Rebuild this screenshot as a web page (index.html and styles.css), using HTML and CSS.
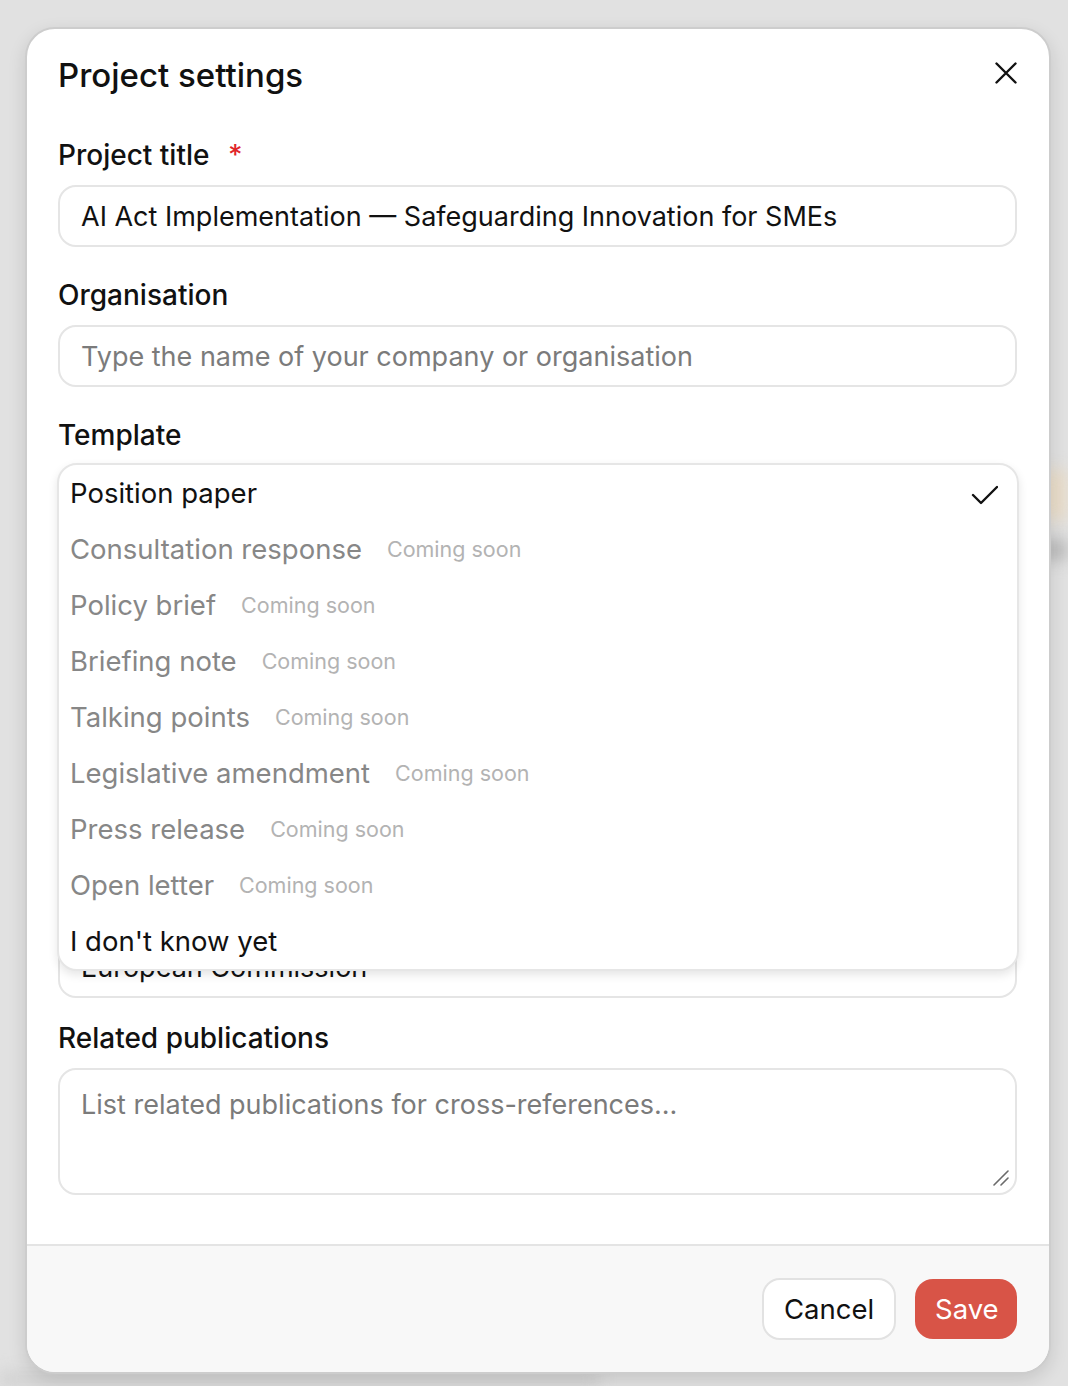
FILE: index.html
```html
<!DOCTYPE html>
<html>
<head>
    <link rel="stylesheet" href="styles.css">
</head>
<body>
    <div class="backdrop">
        <div class="blur-item blur-a"></div>
        <div class="blur-item blur-b"></div>
        <div class="blur-item blur-c"></div>
    </div>

    <div class="modal">
        <div class="modal-head">
            <h2 class="modal-title">Project settings</h2>
            <button class="icon-btn" aria-label="Close">
                <svg width="22" height="22" viewBox="0 0 22 22" fill="none" stroke="#111" stroke-width="2.4" stroke-linecap="round">
                    <path d="M1.5 1.5 L20.5 20.5 M20.5 1.5 L1.5 20.5"/>
                </svg>
            </button>
        </div>

        <div class="modal-body">
            <div class="field">
                <label class="label">Project title <span class="req">*</span></label>
                <input class="input" type="text" value="AI Act Implementation — Safeguarding Innovation for SMEs">
            </div>

            <div class="field">
                <label class="label">Organisation</label>
                <input class="input" type="text" placeholder="Type the name of your company or organisation">
            </div>

            <div class="field">
                <label class="label">Template</label>
                <div class="select-wrap">
                    <div class="input select">Position paper</div>

                    <ul class="menu">
                        <li class="menu-item selected">
                            <span>Position paper</span>
                            <svg class="check" width="28" height="22" viewBox="0 0 28 22" fill="none" stroke="#111" stroke-width="2.4" stroke-linecap="round" stroke-linejoin="round">
                                <path d="M3 11 L11 19 L27 3"/>
                            </svg>
                        </li>
                        <li class="menu-item disabled">Consultation response <span class="soon">Coming soon</span></li>
                        <li class="menu-item disabled">Policy brief <span class="soon">Coming soon</span></li>
                        <li class="menu-item disabled">Briefing note <span class="soon">Coming soon</span></li>
                        <li class="menu-item disabled">Talking points <span class="soon">Coming soon</span></li>
                        <li class="menu-item disabled">Legislative amendment <span class="soon">Coming soon</span></li>
                        <li class="menu-item disabled">Press release <span class="soon">Coming soon</span></li>
                        <li class="menu-item disabled">Open letter <span class="soon">Coming soon</span></li>
                        <li class="menu-item">I don't know yet</li>
                    </ul>
                </div>
            </div>

            <div class="field">
                <label class="label">Audience</label>
                <input class="input" type="text" placeholder="Policy makers">
            </div>

            <div class="field">
                <label class="label">Key messages</label>
                <textarea class="input textarea-sm"></textarea>
            </div>

            <div class="field field-tight">
                <label class="label">Addressed to</label>
                <input class="input" type="text" value="European Commission">
            </div>

            <div class="field">
                <label class="label">Related publications</label>
                <div class="textarea-wrap">
                    <textarea class="input textarea" placeholder="List related publications for cross-references..."></textarea>
                    <svg class="grip" width="16" height="16" viewBox="0 0 16 16" fill="none" stroke="#6b6b6b" stroke-width="1.6" stroke-linecap="round">
                        <path d="M15 1 L1 15 M15 8 L8 15"/>
                    </svg>
                </div>
            </div>
        </div>

        <div class="modal-foot">
            <button class="btn btn-secondary">Cancel</button>
            <button class="btn btn-primary">Save</button>
        </div>
    </div>
</body>
</html>
```

FILE: styles.css
```css
/* General */
html, body {
    margin: 0;
    padding: 0;
}
body {
    background: #e1e1e1;
    font-family: "Inter", "Noto Sans", sans-serif;
    color: #111;
    padding: 27px 17px 12px 25px;
    position: relative;
    overflow: hidden;
    height: 1386px;
    box-sizing: border-box;
}
.backdrop { position: absolute; inset: 0; z-index: 0; }
.blur-item { position: absolute; filter: blur(8px); }
.blur-a { right: 0; top: 470px; width: 30px; height: 50px; background: #e9dcc8; }
.blur-b { right: 0; top: 540px; width: 30px; height: 20px; background: #b9b9b9; }
.blur-c { left: 0; bottom: 0; width: 600px; height: 14px; background: #cfcfcf; }

/* Modal */
.modal {
    position: relative;
    z-index: 1;
    width: 1026px;
    box-sizing: border-box;
    background: #fff;
    border: 2px solid #cdcdcd;
    border-radius: 30px;
    overflow: hidden;
    box-shadow: 0 6px 18px rgba(0,0,0,0.12);
}
.modal-head {
    display: flex;
    justify-content: space-between;
    align-items: center;
    padding: 26px 32px 0 31px;
    height: 40px;
}
.modal-title {
    margin: 0;
    font-size: 33px;
    font-weight: 500;
    line-height: 40px;
}
.icon-btn {
    border: 0;
    background: none;
    padding: 0;
    display: flex;
    margin-top: -4px;
}

.modal-body {
    padding: 43px 32px 49px 31px;
}
.field { margin-bottom: 31px; }
.field:last-child { margin-bottom: 0; }
.field-tight { margin-bottom: 23px; }
.label {
    display: block;
    font-size: 28px;
    font-weight: 500;
    line-height: 34px;
    margin-bottom: 13px;
}
.req { color: #e0262a; margin-left: 11px; }

.input {
    display: block;
    width: 100%;
    box-sizing: border-box;
    height: 62px;
    border: 2px solid #e5e5e5;
    border-radius: 18px;
    padding: 0 21px;
    font-family: inherit;
    font-size: 27px;
    color: #111;
    background: #fff;
    outline: none;
}
.input::placeholder { color: #7b7b7b; }
.select { line-height: 58px; }
.textarea-sm { height: 113px; resize: none; }
.textarea-wrap { position: relative; }
.textarea {
    height: 127px;
    padding-top: 18px;
    line-height: 34px;
    resize: none;
}
.grip { position: absolute; right: 8px; bottom: 9px; }

/* Dropdown */
.select-wrap { position: relative; }
.menu {
    position: absolute;
    top: -2px; left: -1px; right: -2px;
    margin: 0;
    padding: 0;
    list-style: none;
    background: #fff;
    border: 2px solid #e6e6e6;
    border-radius: 20px;
    box-shadow: 0 4px 10px rgba(0,0,0,0.10);
    z-index: 2;
}
.menu-item {
    display: flex;
    align-items: center;
    height: 56px;
    padding: 0 19px 0 11px;
    font-size: 27.5px;
    color: #111;
}
.menu-item.selected { justify-content: space-between; }
.menu-item.disabled { color: #878787; }
.check { margin-top: 3px; }
.soon {
    font-size: 21.5px;
    color: #b3b3b3;
    margin-left: 25px;
}

/* Footer */
.modal-foot {
    display: flex;
    justify-content: flex-end;
    align-items: center;
    gap: 19px;
    background: #f8f8f8;
    border-top: 2px solid #e4e4e4;
    padding: 32px;
}
.btn {
    height: 62px;
    border-radius: 18px;
    font-family: inherit;
    font-size: 27.5px;
    padding: 0 20px;
}
.btn-secondary {
    background: #fff;
    border: 2px solid #e2e2e2;
    color: #111;
    width: 134px;
}
.btn-primary {
    background: #d85447;
    border: 0;
    color: #fff;
    height: 60px;
    width: 102px;
}
```
